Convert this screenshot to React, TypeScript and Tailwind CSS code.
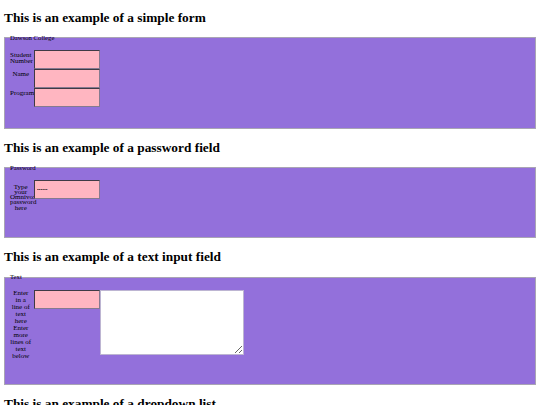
const serif = "font-['Liberation_Serif','Times_New_Roman',serif]";

const Heading = ({ children, top }: { children: string; top: string }) => (
  <h2 className={`${top} mb-[9px] text-[13.33px] leading-[15px] font-bold text-black`}>{children}</h2>
);

const PinkInput = ({ type = "text", value = "" }: { type?: string; value?: string }) => (
  <input
    type={type}
    defaultValue={value}
    readOnly
    className="h-[19px] w-[66px] shrink-0 bg-[#ffb6c1] border-t border-l border-t-[#3f3a44] border-l-[#3f3a44] border-b border-r border-b-[#857a90] border-r-[#857a90] pl-[2px] text-[5px] text-black outline-none"
  />
);

const Row = ({ label, leading, pt, children }: { label: string; leading: string; pt: string; children: React.ReactNode }) => (
  <div className="flex items-start">
    <label className={`w-[21.5px] shrink-0 text-center text-[7px] ${leading} ${pt} text-black`}>{label}</label>
    <div className="ml-[2.5px] flex items-start">{children}</div>
  </div>
);

const Box = ({ legend, inner, children }: { legend: string; inner: string; children: React.ReactNode }) => (
  <fieldset className="border border-[#a9a4b4] bg-[#9370db] pl-[5px] pr-0 pb-0">
    <legend className="text-[6.7px] leading-[8px] text-black">{legend}</legend>
    <div className={`${inner} pt-[8.5px]`}>{children}</div>
  </fieldset>
);

export default function App() {
  return (
    <div className={`h-[405px] overflow-hidden bg-white px-[4px] pt-px ${serif}`}>
      <Heading top="mt-[8.5px]">This is an example of a simple form</Heading>
      <Box legend="Dawson College" inner="h-[86px]">
        <Row label="Student Number" leading="leading-[6px]" pt="pt-[2.3px]">
          <PinkInput />
        </Row>
        <Row label="Name" leading="leading-[6px]" pt="pt-[2.3px]">
          <PinkInput />
        </Row>
        <Row label="Program" leading="leading-[6px]" pt="pt-[2.3px]">
          <PinkInput />
        </Row>
      </Box>

      <Heading top="mt-[11px]">This is an example of a password field</Heading>
      <Box legend="Password" inner="h-[65.5px]">
        <Row label="Type your Omnivox password here" leading="leading-[5.3px]" pt="pt-[4.5px]">
          <PinkInput type="password" value="secret" />
        </Row>
      </Box>

      <Heading top="mt-[11px]">This is an example of a text input field</Heading>
      <Box legend="Text" inner="h-[103px]">
        <Row label="Enter in a line of text here Enter more lines of text below" leading="leading-[7px]" pt="pt-0">
          <PinkInput />
          <textarea
            readOnly
            className="h-[65px] w-[144px] border border-[#bdb5d2] bg-white outline-none"
          />
        </Row>
      </Box>

      <Heading top="mt-[11px]">This is an example of a dropdown list</Heading>
      <Box legend="Dropdown" inner="h-[60px]">
        <select className="h-[14px] w-[66px] bg-white text-[7px]">
          <option>Choose one</option>
        </select>
      </Box>
    </div>
  );
}
